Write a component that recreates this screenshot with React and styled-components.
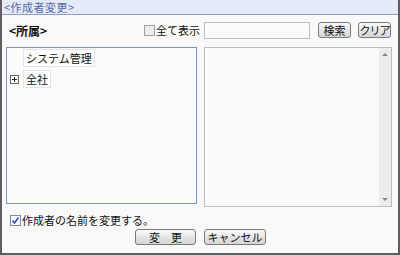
import React from 'react';
import styled, { createGlobalStyle } from 'styled-components';

const Global = createGlobalStyle`
  html, body { margin: 0; padding: 0; background: #ffffff; }
  body { font-family: "Noto Sans CJK JP", "Liberation Sans", sans-serif; }
`;

const Dialog = styled.div`
  box-sizing: border-box;
  width: 400px;
  height: 255px;
  background: #f9f9f9;
  border-left: 2px solid #5e5e5e;
  border-right: 2px solid #5e5e5e;
  border-bottom: 2px solid #5e5e5e;
  display: flex;
  flex-direction: column;
  font-size: 11px;
  line-height: 13px;
  color: #111;
`;

const TitleBar = styled.div`
  height: 14px;
  line-height: 15px;
  padding-left: 2px;
  background: #e4eaf7;
  border-bottom: 1px solid #8f9cc4;
  color: #5569a8;
  font-size: 11px;
  letter-spacing: 0.5px;
  white-space: nowrap;
`;

const Body = styled.div`
  flex: 1;
  display: flex;
  flex-direction: column;
  padding: 6px 7px 0 4px;
`;

const TopRow = styled.div`
  display: flex;
  align-items: center;
  height: 18px;
`;

const Heading = styled.div`
  font-weight: bold;
  font-size: 12px;
  padding-left: 3px;
  flex: 1;
`;

const Check = styled.label`
  display: flex;
  align-items: center;
  gap: 1px;
  white-space: nowrap;
  margin-right: ${p => p.$mr || 0}px;
`;

const Box = styled.span`
  box-sizing: border-box;
  width: 11px;
  height: 11px;
  border: 1px solid ${p => (p.$checked ? '#7d8aa8' : '#a0a0a0')};
  background: ${p => (p.$checked ? '#ffffff' : '#ececec')};
  display: inline-flex;
  align-items: center;
  justify-content: center;
`;

const TextInput = styled.div`
  box-sizing: border-box;
  width: 106px;
  height: 17px;
  border: 1px solid #bcbcbc;
  background: #fbfbfb;
`;

const Button = styled.button`
  box-sizing: border-box;
  height: 16px;
  width: ${p => p.$w}px;
  margin-left: ${p => p.$ml || 0}px;
  padding: 0;
  border: 1px solid #7a7a7a;
  border-radius: 3px;
  background: linear-gradient(#fbfbfb, #e2e2e2 60%, #d6d6d6);
  font-family: "Noto Sans CJK JP", "Liberation Sans", sans-serif;
  font-size: 11px;
  line-height: 14px;
  letter-spacing: ${p => p.$ls || 0}px;
  white-space: nowrap;
  overflow: hidden;
  color: #111;
`;

const Panels = styled.div`
  display: grid;
  grid-template-columns: 191px 188px;
  gap: 7px;
  align-items: start;
  margin-top: 8px;
`;

const Tree = styled.div`
  box-sizing: border-box;
  height: 157px;
  border: 1px solid #6f9ad2;
  background: #fbfbfb;
  padding: 1px 0 0 3px;
  display: flex;
  flex-direction: column;
  gap: 3px;
`;

const Node = styled.div`
  display: flex;
  align-items: center;
  gap: 3px;
`;

const Toggle = styled.span`
  box-sizing: border-box;
  width: 9px;
  height: 9px;
  border: 1px solid #666;
  background: #fff;
  position: relative;
  visibility: ${p => (p.$hidden ? 'hidden' : 'visible')};
  &::before, &::after {
    content: '';
    position: absolute;
    background: #222;
  }
  &::before { left: 1px; right: 1px; top: 3px; height: 1px; }
  &::after { top: 1px; bottom: 1px; left: 3px; width: 1px; }
`;

const NodeLabel = styled.span`
  margin-left: 1px;
  padding: 0 2px;
  height: 16px;
  line-height: 16px;
  background: #ffffff;
  border: 1px solid #e2e2f2;
  white-space: nowrap;
`;

const ListBox = styled.div`
  box-sizing: border-box;
  height: 160px;
  border: 1px solid #bdbdbd;
  background: #fafafa;
  display: flex;
  justify-content: flex-end;
`;

const ScrollTrack = styled.div`
  width: 12px;
  background: #ececec;
  display: flex;
  flex-direction: column;
  justify-content: space-between;
  align-items: center;
  padding: 5px 0;
`;

const Arrow = styled.span`
  width: 0;
  height: 0;
  border-left: 3px solid transparent;
  border-right: 3px solid transparent;
  ${p => (p.$down ? 'border-top: 3px solid #888;' : 'border-bottom: 3px solid #888;')}
`;

const OptionRow = styled.div`
  margin-top: 7px;
  padding-left: 4px;
`;

const Footer = styled.div`
  display: flex;
  justify-content: center;
  gap: 8px;
  margin-top: 2px;
  padding-left: 4px;
`;

function CheckMark() {
  return (
    <svg width="9" height="9" viewBox="0 0 9 9">
      <path d="M1.5 4.5 L3.5 7 L7.5 1.5" fill="none" stroke="#2c4fb8" strokeWidth="1.6" />
    </svg>
  );
}

export default function App() {
  return (
    <>
      <Global />
      <Dialog>
        <TitleBar>&lt;作成者変更&gt;</TitleBar>
        <Body>
          <TopRow>
            <Heading>&lt;所属&gt;</Heading>
            <Check $mr={4}>
              <Box />
              全て表示
            </Check>
            <TextInput />
            <Button $w={33} $ml={8}>検索</Button>
            <Button $w={33} $ml={7} $ls={-1}>クリア</Button>
          </TopRow>

          <Panels>
            <Tree>
              <Node>
                <Toggle $hidden />
                <NodeLabel>システム管理</NodeLabel>
              </Node>
              <Node>
                <Toggle />
                <NodeLabel>全社</NodeLabel>
              </Node>
            </Tree>
            <ListBox>
              <ScrollTrack>
                <Arrow />
                <Arrow $down />
              </ScrollTrack>
            </ListBox>
          </Panels>

          <OptionRow>
            <Check>
              <Box $checked>
                <CheckMark />
              </Box>
              作成者の名前を変更する。
            </Check>
          </OptionRow>

          <Footer>
            <Button $w={61}>変　更</Button>
            <Button $w={62}>キャンセル</Button>
          </Footer>
        </Body>
      </Dialog>
    </>
  );
}
